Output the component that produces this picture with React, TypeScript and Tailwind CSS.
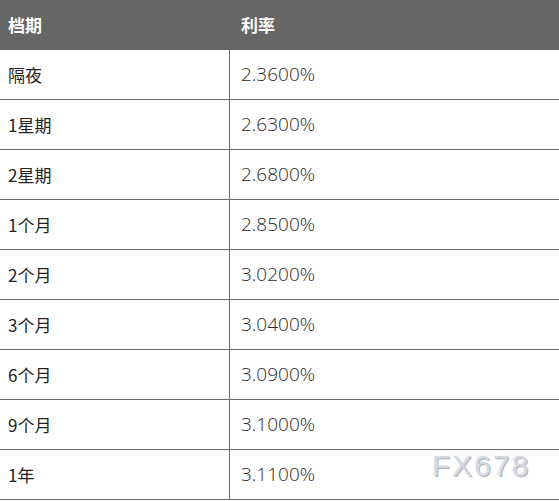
import React from 'react';

const rows: [string, string][] = [
  ['隔夜', '2.3600%'],
  ['1星期', '2.6300%'],
  ['2星期', '2.6800%'],
  ['1个月', '2.8500%'],
  ['2个月', '3.0200%'],
  ['3个月', '3.0400%'],
  ['6个月', '3.0900%'],
  ['9个月', '3.1000%'],
  ['1年', '3.1100%'],
];

export default function App() {
  return (
    <div className="w-[559px] h-[501px] bg-white relative font-['Open_Sans','Noto_Sans_CJK_SC',sans-serif]">
      <div className="grid grid-cols-[230px_1fr] h-[50px] bg-[#666666] text-white font-bold text-[17px]">
        <div className="flex items-center pl-2 font-['Noto_Sans_CJK_SC',sans-serif]">档期</div>
        <div className="flex items-center pl-[11px] font-['Noto_Sans_CJK_SC',sans-serif]">利率</div>
      </div>
      {rows.map(([term, rate]) => (
        <div key={term} className="grid grid-cols-[230px_1fr] h-[50px] border-b border-[#6b6b6b]">
          <div className="flex items-center pl-2 border-r border-[#6b6b6b] text-[17px] text-[#222] font-['Noto_Sans_CJK_SC',sans-serif]">
            {term}
          </div>
          <div className="flex items-center pl-[11px] text-[19px] text-[#2a2a2a] font-light font-['Open_Sans',sans-serif]">
            {rate}
          </div>
        </div>
      ))}
      <div className="absolute left-[432px] top-[451px] leading-none text-[30px] tracking-[2px] text-[#d6dae0] font-['Liberation_Sans',sans-serif] [text-shadow:1px_1px_0_#adb2bb,-1px_-1px_0_#f3f4f6]">
        FX678
      </div>
    </div>
  );
}
